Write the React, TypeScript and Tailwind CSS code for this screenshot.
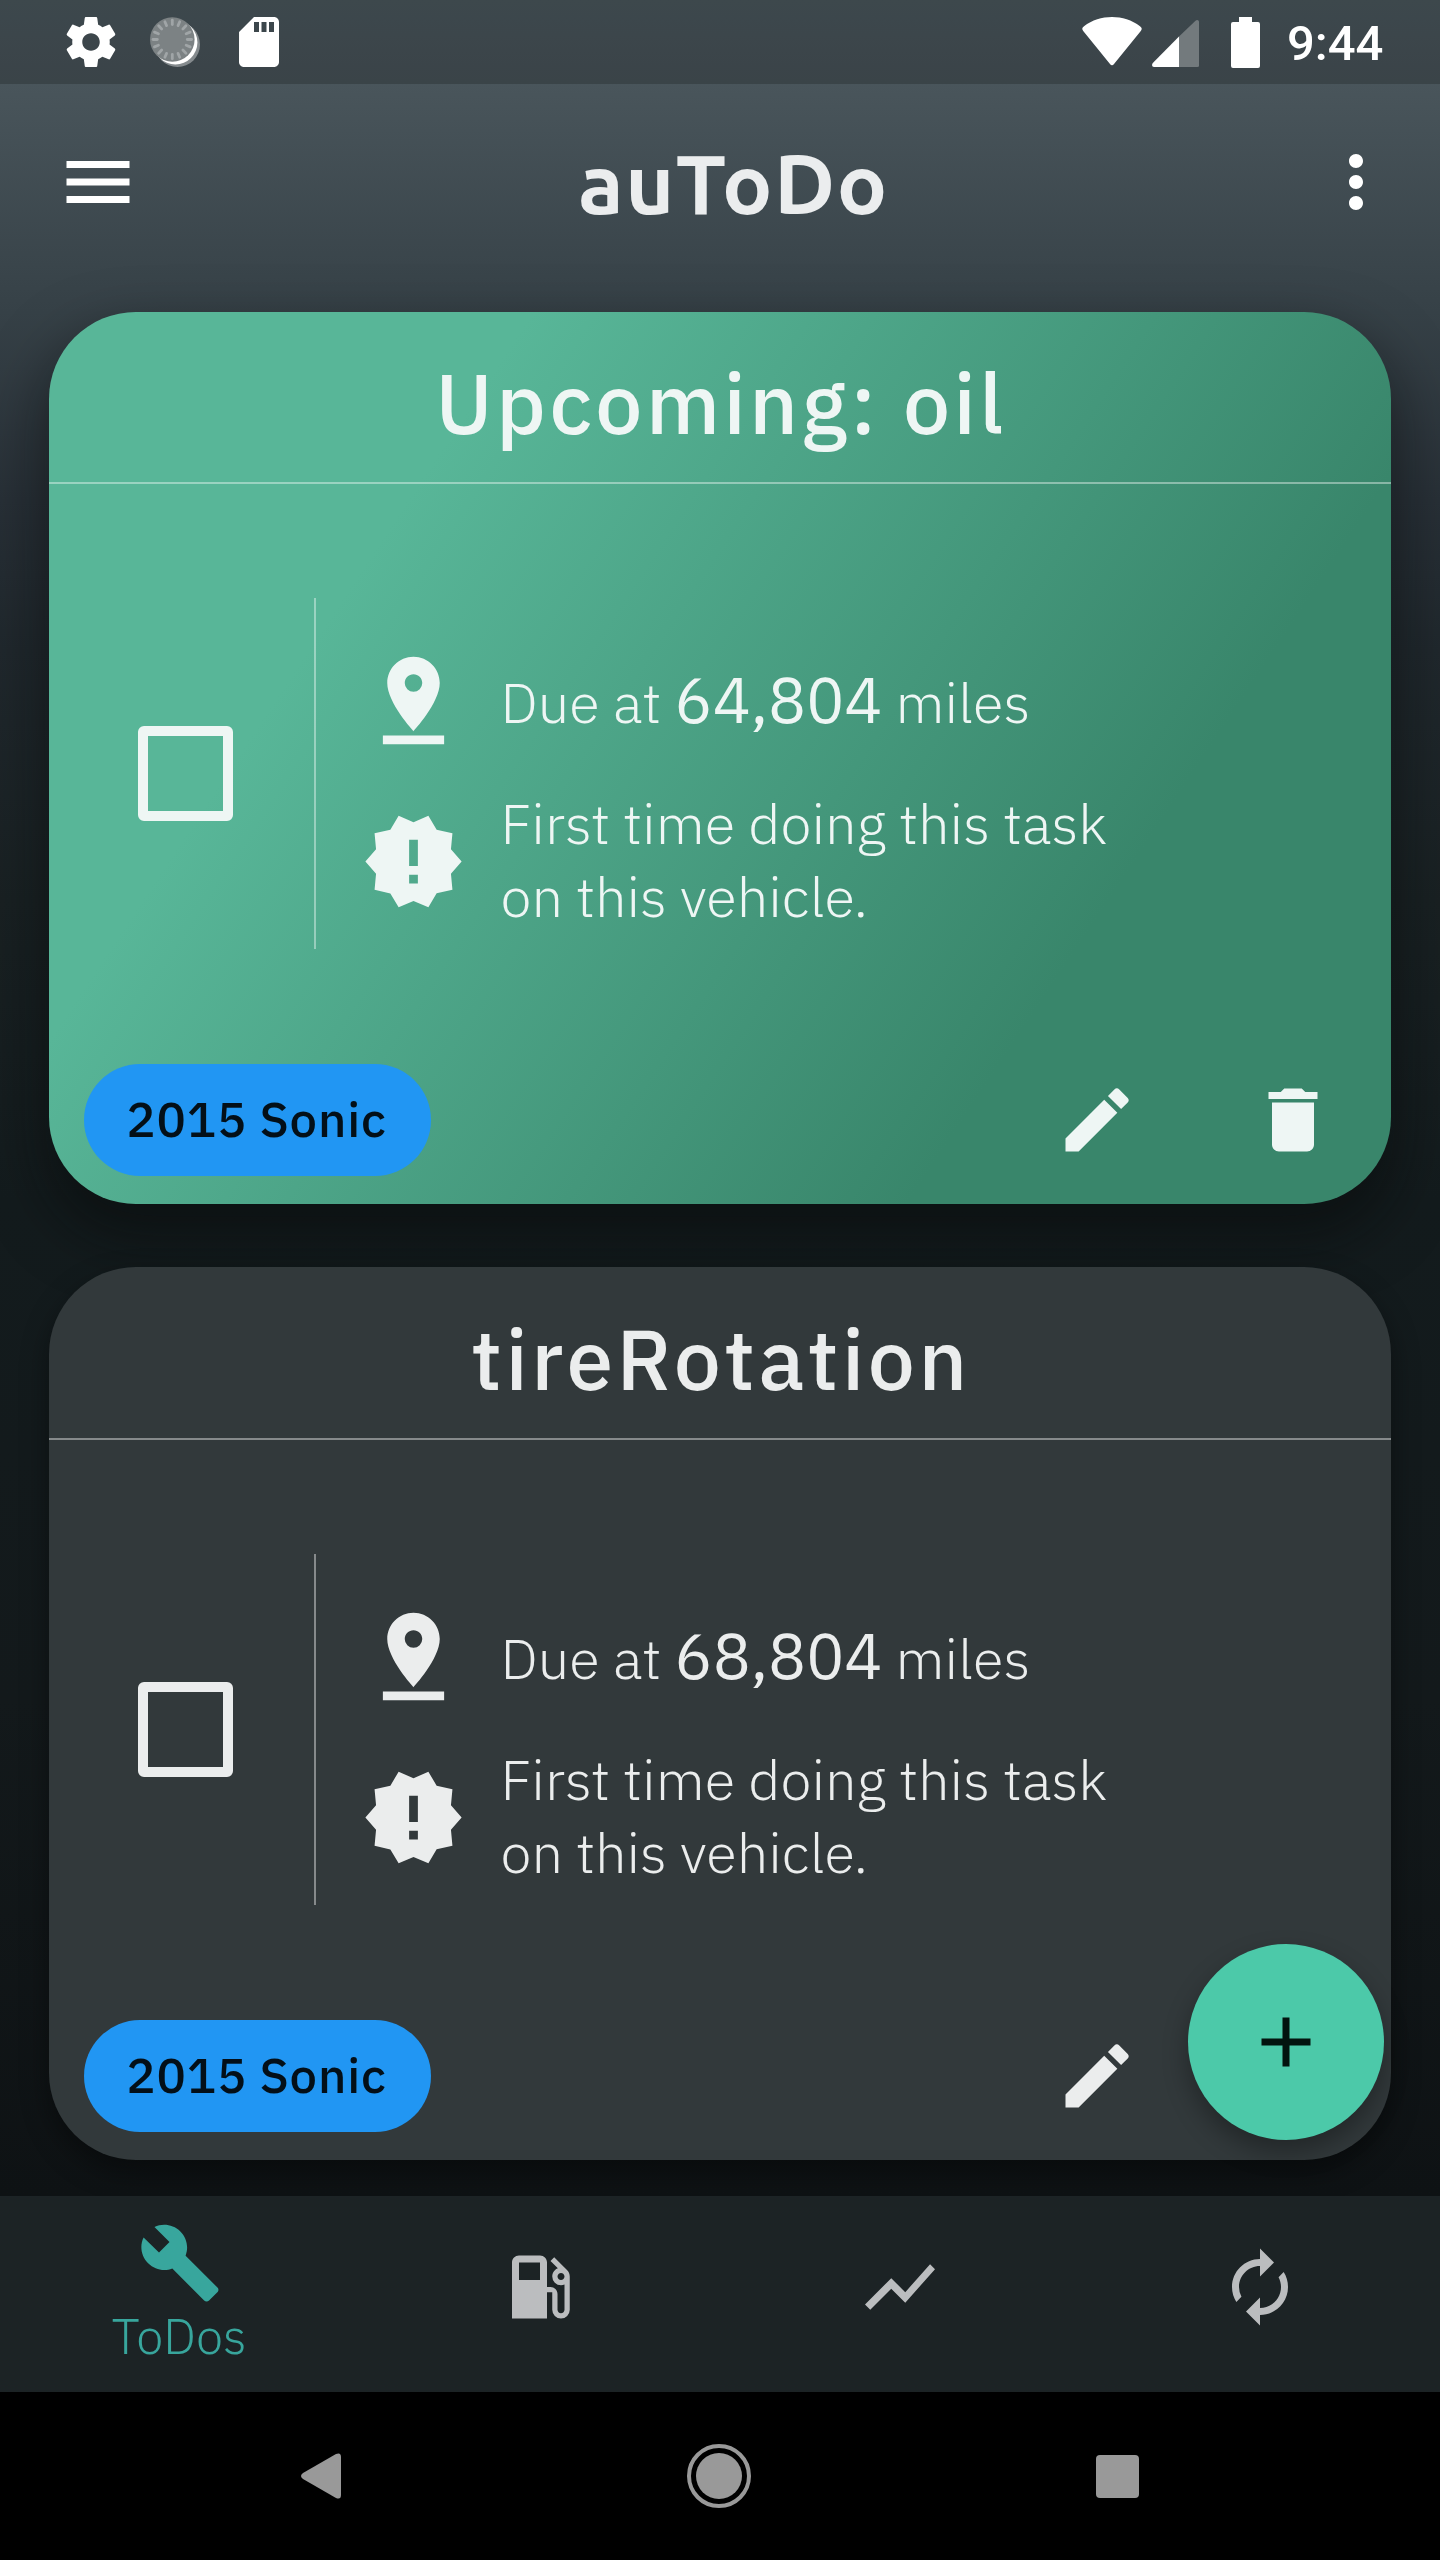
import React from "react";
import {
  MdSdStorage, MdMenu, MdMoreVert, MdPinDrop, MdNewReleases, MdEdit, MdDelete,
  MdBuild, MdLocalGasStation, MdShowChart, MdAutorenew, MdAdd,
} from "react-icons/md";

const PLEX = "font-['IBM_Plex_Sans','Open_Sans',sans-serif]";

const SPOKES = Array.from({ length: 16 }, (_, i) => i * 22.5);

function StatusBar() {
  return (
    <div className="flex h-[84px] shrink-0 items-center bg-black/20 text-white">
      <svg className="ml-[61px] size-[60px]" viewBox="0 0 24 24" fill="currentColor">
        <path d="M19.43 12.98c.04-.32.07-.64.07-.98s-.03-.66-.07-.98l2.110-1.650c.19-.15.24-.42.12-.64l-2-3.460c-.12-.22-.39-.3-.61-.22l-2.490 1c-.52-.4-1.080-.73-1.690-.98l-.38-2.650C14.460 2.180 14.250 2 14 2h-4c-.25 0-.46.18-.49.42l-.38 2.650c-.61.25-1.170.59-1.690.98l-2.490-1c-.23-.09-.49 0-.61.22l-2 3.460c-.13.22-.07.49.12.64l2.110 1.650c-.04.32-.07.65-.07.98s.03.66.07.98l-2.110 1.650c-.19.15-.24.42-.12.64l2 3.460c.12.22.39.3.61.22l2.490-1c.52.4 1.080.73 1.690.98l.38 2.650c.03.24.24.42.49.42h4c.25 0 .46-.18.49-.42l.38-2.650c.61-.25 1.170-.59 1.690-.98l2.490 1c.23.09.49 0 .61-.22l2-3.460c.12-.22.07-.49-.12-.64l-2.110-1.650zM12 15.500c-1.930 0-3.500-1.570-3.500-3.500s1.570-3.500 3.500-3.500 3.500 1.570 3.500 3.500-1.570 3.500-3.500 3.500z" />
      </svg>
      <svg className="ml-[29px] size-[50px]" viewBox="0 0 50 50">
        <circle cx="27.500" cy="27.500" r="22.500" fill="#858b8e" />
        <circle cx="25.400" cy="25.400" r="22" fill="#fff" />
        <circle cx="22.300" cy="22.500" r="22.300" fill="#7c8284" />
        {SPOKES.map((a) => (
          <path key={a} d="M22.300 3.200V7.500" transform={`rotate(${a} 22.3 22.5)`} stroke="#a0a5a7" strokeWidth="2.800" strokeLinecap="round" />
        ))}
      </svg>
      <MdSdStorage className="ml-[29px] size-[60px]" />
      <div className="grow" />
      <svg className="h-[50px] w-[60px]" viewBox="0 0 60 50">
        <path d="M1.200 14C-.4 11.800.2 10.800 2 9.300C18-3 42-3 58 9.300C59.800 10.800 60.400 11.800 58.800 14L32 47C30.800 48.600 29.200 48.600 28 47Z" fill="#fff" />
      </svg>
      <svg className="ml-[10px] h-[50px] w-[47px]" viewBox="0 0 47 50">
        <path d="M27 19.500L43.500 3.700C45 2.300 47 3 47 5V48.500Q47 50 45.500 50H27Z" fill="#737a7d" />
        <path d="M27 19.500V50H2C0 50-.5 47.800.8 46Z" fill="#fff" />
      </svg>
      <svg className="ml-[32px] h-[52px] w-[29px]" viewBox="0 0 29 52">
        <path d="M8 1H21V6H27Q29 6 29 8V50Q29 52 27 52H2Q0 52 0 50V8Q0 6 2 6H8Z" fill="#fff" />
      </svg>
      <span className="mr-[56px] ml-[27px] w-[97px] whitespace-nowrap pt-[3px] font-['Roboto',sans-serif] text-[49px] font-medium leading-none">9:44</span>
    </div>
  );
}

function Card({ title, miles, green }: { title: string; miles: string; green?: boolean }) {
  return (
    <section
      className={
        "flex w-[1342px] shrink-0 flex-col rounded-[87px] " +
        (green
          ? "h-[892px] bg-[linear-gradient(123.6deg,#58b698_25%,#39866b_75%)] text-[#eef6f4] shadow-[0_28px_60px_4px_rgba(6,8,8,0.5)]"
          : "-mt-px h-[893px] bg-[#32393b] pt-px text-[#ebeded] shadow-[0_12px_28px_0_rgba(0,0,0,0.4)]")
      }
    >
      <div className="flex h-[170px] shrink-0 items-center justify-center pl-[2px] pt-[11px]">
        <h2 className="whitespace-nowrap text-[84px] font-medium leading-none tracking-[3.500px]">{title}</h2>
      </div>
      <div className={"h-[2px] shrink-0 " + (green ? "bg-white/40" : "bg-[#868a8b]")} />
      <div className="mt-[114px] flex h-[351px] shrink-0">
        <div className="flex w-[265px] items-center justify-center pl-[8px]">
          <div className="size-[95px] rounded-[6px] border-[10px] border-current" />
        </div>
        <div className={"w-[2px] " + (green ? "bg-white/40" : "bg-[#868a8b]")} />
        <div className="ml-[44.500px] flex flex-col pt-[49px] text-[56px] font-light leading-[73px]">
          <div className="flex h-[106px] items-center">
            <MdPinDrop className="size-[105px]" />
            <p className="ml-[35px] whitespace-nowrap pt-[2px]">
              Due at <span className="text-[63.500px] font-normal">{miles}</span> miles
            </p>
          </div>
          <div className="mt-[34px] flex h-[146px] items-center">
            <MdNewReleases className="mt-[2px] size-[105px]" />
            <p className="-mt-[1px] ml-[35px] whitespace-nowrap">First time doing this task<br />on this vehicle.</p>
          </div>
        </div>
      </div>
      <div className="mt-[115px] flex h-[112px] items-center">
        <div className="ml-[35px] flex h-[112px] w-[347px] items-center justify-center rounded-full bg-[#2196f3] pb-[3px] pr-[2px] text-black/90">
          <span className="whitespace-nowrap text-[49px] font-medium leading-none tracking-[0.800px]">2015 Sonic</span>
        </div>
        <MdEdit className="ml-[624px] size-[84px]" />
        <MdDelete className="ml-[112px] size-[84px]" />
      </div>
    </section>
  );
}

export default function App() {
  return (
    <div className={"relative flex h-[2560px] w-[1440px] flex-col overflow-hidden bg-[linear-gradient(180deg,#4d5a60_0px,#49555b_84px,#374248_300px,#283037_500px,#20282d_650px,#192123_900px,#131b1d_1200px,#13191b_1700px,#0e1214_2196px)] " + PLEX}>
      <StatusBar />
      <header className="flex h-[196px] shrink-0 items-center justify-between px-[56px] text-white">
        <MdMenu className="size-[84px]" />
        <h1 className="ml-[13px] whitespace-nowrap pt-[1px] font-['Ubuntu','Noto_Sans',sans-serif] text-[84px] font-bold leading-none tracking-[1.500px] text-[#ebedee]">auToDo</h1>
        <MdMoreVert className="-mr-[14px] size-[84px]" />
      </header>
      <main className="flex h-[1916px] shrink-0 flex-col items-center gap-[64px] pt-[32px]">
        <Card title="Upcoming: oil" miles="64,804" green />
        <Card title="tireRotation" miles="68,804" />
      </main>
      <nav className="grid h-[196px] shrink-0 grid-cols-4 items-center justify-items-center bg-[#1c2325] text-[#bbbdbf]">
        <div className="flex flex-col items-center text-[#38a69d]">
          <MdBuild className="size-[84px]" />
          <span className="-mt-px mr-[2px] text-[49px] font-light leading-[64px]">ToDos</span>
        </div>
        <MdLocalGasStation className="mb-[14px] size-[84px]" />
        <MdShowChart className="mb-[14px] size-[84px]" />
        <MdAutorenew className="mb-[14px] size-[84px]" />
      </nav>
      <div className="flex h-[168px] shrink-0 items-center bg-black">
        <svg className="ml-[301px] h-[46px] w-[40px]" viewBox="0 0 40 46"><path d="M2 20L35 1Q40-1 40 4V42Q40 47 35 45L2 26Q-2 23 2 20Z" fill="#999" /></svg>
        <svg className="ml-[346px] size-[64px]" viewBox="0 0 64 64"><circle cx="32" cy="32" r="30" fill="none" stroke="#999" strokeWidth="4" /><circle cx="32" cy="32" r="23" fill="#999" /></svg>
        <div className="ml-[345px] size-[43px] rounded-[4px] bg-[#999]" />
      </div>
      <button className="absolute left-[1188px] top-[1944px] flex size-[196px] items-center justify-center rounded-full bg-[#4cc9a9] text-[#02140f] shadow-[0_12px_26px_0_rgba(0,0,0,0.32)]">
        <MdAdd className="size-[84px]" />
      </button>
    </div>
  );
}
